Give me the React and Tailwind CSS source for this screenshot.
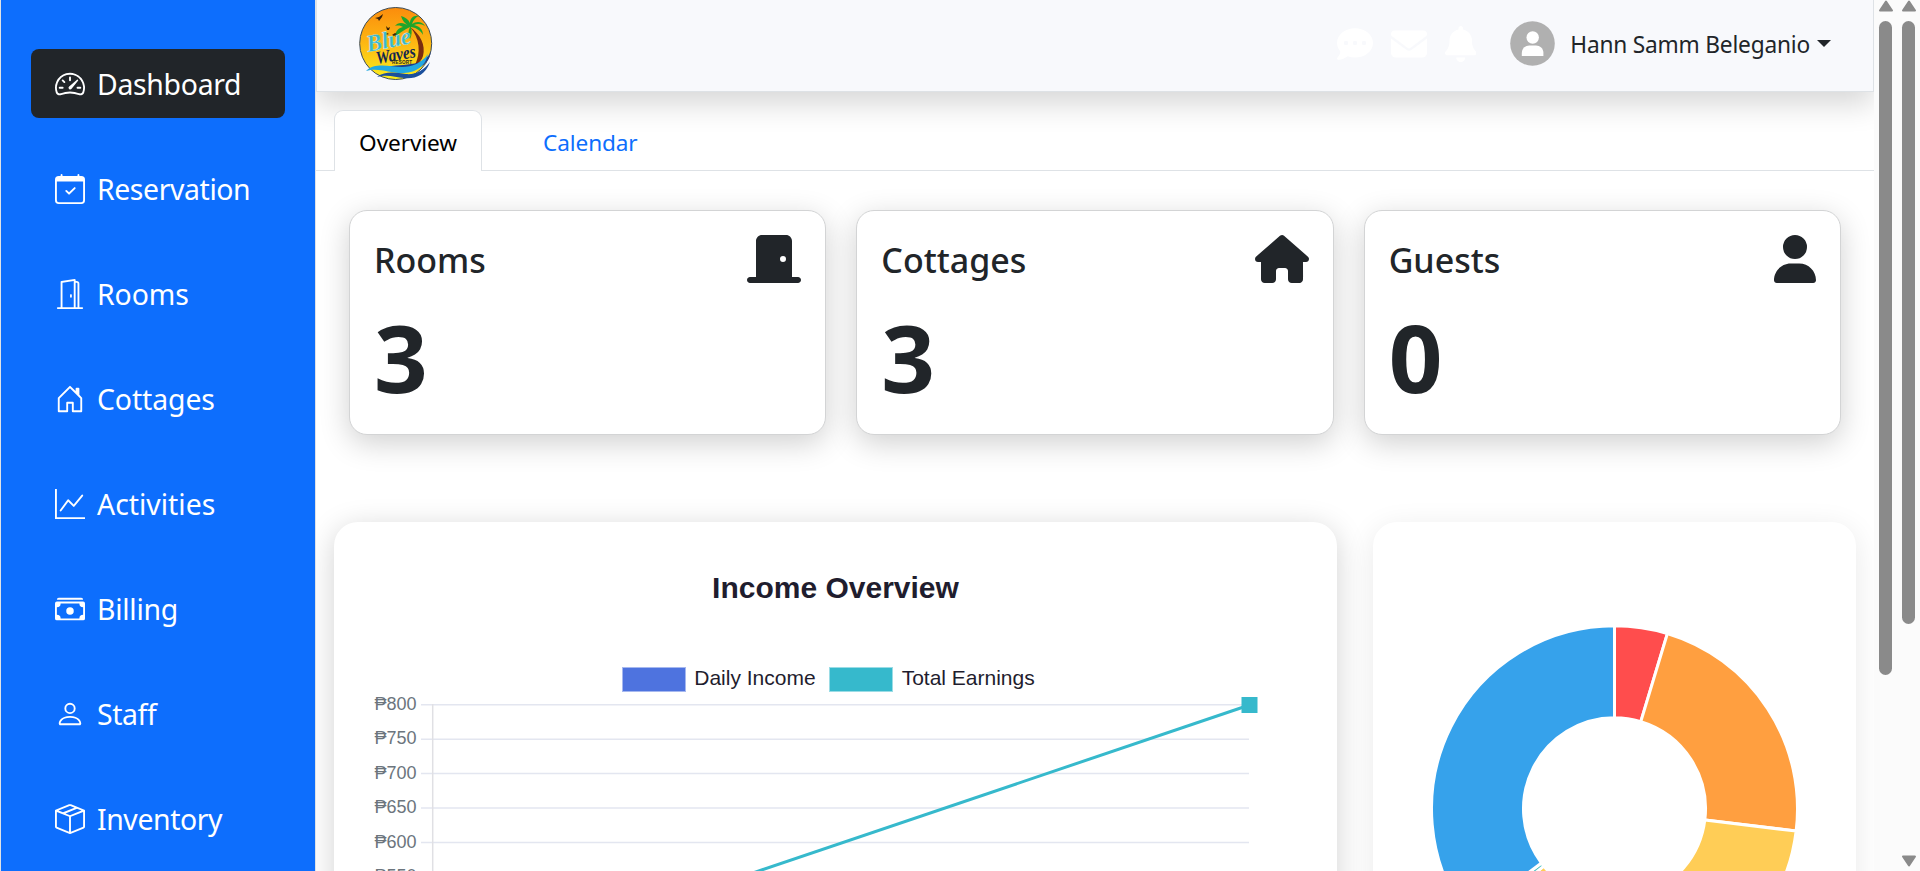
import {
  BsSpeedometer2,
  BsCalendarCheck,
  BsDoorOpen,
  BsHouseDoor,
  BsGraphUp,
  BsCashStack,
  BsPerson,
  BsBoxSeam,
} from "react-icons/bs";
import {
  FaDoorClosed,
  FaHouse,
  FaUser,
  FaCommentDots,
  FaEnvelope,
  FaBell,
} from "react-icons/fa6";

const NAV = [
  { label: "Dashboard", Icon: BsSpeedometer2, active: true, tracking: "tracking-[-0.3px]" },
  { label: "Reservation", Icon: BsCalendarCheck, tracking: "tracking-[-0.4px]" },
  { label: "Rooms", Icon: BsDoorOpen, tracking: "tracking-[-0.1px]" },
  { label: "Cottages", Icon: BsHouseDoor, tracking: "tracking-[-0.1px]" },
  { label: "Activities", Icon: BsGraphUp, tracking: "tracking-normal" },
  { label: "Billing", Icon: BsCashStack, tracking: "tracking-[-0.25px]" },
  { label: "Staff", Icon: BsPerson, tracking: "tracking-[-0.4px]" },
  { label: "Inventory", Icon: BsBoxSeam, tracking: "tracking-[-0.4px]" },
];

const STATS = [
  { label: "Rooms", value: 3, Icon: FaDoorClosed, iconSize: "h-12 w-[54px]" },
  { label: "Cottages", value: 3, Icon: FaHouse, iconSize: "h-12 w-[54px]" },
  { label: "Guests", value: 0, Icon: FaUser, iconSize: "h-12 w-[42px]" },
];

const TICKS = [800, 750, 700, 650, 600, 550];

function Sidebar() {
  return (
    <aside className="flex h-full w-[316px] shrink-0 flex-col gap-9 border-x border-l-[#dee2e6] border-r-[#dee2e6] bg-[#0d6efd] px-[30px] pt-[49px]">
      {NAV.map(({ label, Icon, active, tracking }) => (
        <a
          key={label}
          className={
            active
              ? "flex h-[69px] shrink-0 items-center rounded-lg bg-[#212529] pl-6 text-white"
              : "flex h-[69px] shrink-0 items-center rounded-lg pl-6 text-white"
          }
        >
          <Icon className="size-[30px] shrink-0" />
          <span className={"ml-[12px] text-[28.4px] leading-[40px] " + tracking}>{label}</span>
        </a>
      ))}
    </aside>
  );
}

function Logo() {
  return (
    <svg viewBox="0 0 76 76" className="size-[76px]">
      <defs>
        <linearGradient id="sky" x1="0" y1="0" x2="0" y2="1">
          <stop offset="0" stopColor="#fb8c0c" />
          <stop offset="0.5" stopColor="#fdb813" />
          <stop offset="1" stopColor="#fbee1c" />
        </linearGradient>
        <clipPath id="disc">
          <circle cx="38.7" cy="37.5" r="36" />
        </clipPath>
      </defs>
      <circle cx="38.7" cy="37.5" r="36" fill="url(#sky)" stroke="#3b4a55" strokeWidth="1" />
      <g clipPath="url(#disc)">
        <path d="M53 21c10 7 16 18 13 29-1 4-4 7-8 9 6-12 5-27-5-38z" fill="#7a2d10" />
      </g>
      <path d="M74 46c-2 10-9 17-22 18-10 1-20-2-30 0 12-6 22-4 32-6 10-1 16-5 20-12z" fill="#1d3f8f" />
      <path d="M9 65c9-9 24-4 36-4 10 0 20-4 26-13-3 14-14 19-26 19-13 0-24-6-36-2z" fill="#23a9e1" />
      <path d="M20 71c9-7 20-4 29-3 10 1 18-4 24-12-5 14-15 17-26 16-9-1-17-4-27-1z" fill="#1b4f9c" />
      <path
        d="M53 21c-6-5-12-5-15-1 4-1 6 0 8 1-5 1-8 5-8 10 4-4 9-7 15-10-2 4-2 8 0 12 2-4 2-8 1-12 6 1 10 4 12 8 0-6-4-9-9-10 4-2 8-1 11 1-3-5-9-5-13-2 1-4 4-7 7-8-6-1-9 3-9 7-2-4-5-6-9-7 1 4 4 8 9 11z"
        fill="#1ea52b"
      />
      <path
        d="M18 12l4-1 4-3-1 3-3 4-1-2zM29 20l2 2 2-1-1 3-2 0zM27 28l3-1 2 1-3 1zM35 29l3-2 2 1-3 2z"
        fill="#3a2208"
      />
      <text
        x="11"
        y="46"
        fontSize="24"
        fontStyle="italic"
        fontWeight="700"
        fontFamily="Liberation Serif, serif"
        fill="#37b6c9"
        stroke="#d8f3ee"
        strokeWidth="0.4"
        textLength="45"
        lengthAdjust="spacingAndGlyphs"
        transform="rotate(-11 11 46)"
      >
        Blue
      </text>
      <text
        x="20"
        y="58"
        fontSize="18"
        fontStyle="italic"
        fontWeight="700"
        fontFamily="Liberation Serif, serif"
        fill="#12264f"
        textLength="40"
        lengthAdjust="spacingAndGlyphs"
        transform="rotate(-10 20 58)"
      >
        Waves
      </text>
      <text x="35" y="58" fontSize="4.6" fontWeight="700" fontFamily="Liberation Sans, sans-serif" fill="#2a2a20" textLength="20">
        RESORT
      </text>
    </svg>
  );
}

function Navbar() {
  return (
    <header className="relative flex h-[92px] shrink-0 items-start justify-between border border-t-0 border-[#dee2e6] bg-[#f8f9fc] shadow-[0_12px_28px_rgba(0,0,0,0.16)]">
      <div className="pl-[40px] pt-[6px]">
        <Logo />
      </div>
      <div className="flex items-center pr-[42px] pt-[21px]">
        <div className="flex items-center gap-[18px] text-white">
          <FaCommentDots className="h-[36px] w-[36px]" />
          <FaEnvelope className="h-[36px] w-[36px]" />
          <FaBell className="h-[36px] w-[31.5px]" />
        </div>
        <svg viewBox="0 0 45 45" className="ml-[34px] size-[45px]">
          <circle cx="22.5" cy="22.5" r="22.3" fill="#b0b0b0" />
          <circle cx="22.7" cy="16.5" r="6.2" fill="#fff" />
          <path d="M11.8 35v-3c0-5 4-7.6 7.6-7.6h6.6c4 0 7.4 3 7.4 7.4V35z" fill="#fff" />
        </svg>
        <span className="ml-[15px] pt-[2px] text-[22.7px] leading-[36px] tracking-[-0.2px] text-[#212529]">
          Hann Samm Beleganio
        </span>
        <span className="ml-[7px] border-x-[7px] border-t-[7px] border-x-transparent border-t-[#212529]" />
      </div>
    </header>
  );
}

function Tabs() {
  return (
    <nav className="flex h-[61px] shrink-0 items-stretch pl-[18px] text-[22.6px] shadow-[inset_0_-1px_0_#dee2e6]">
      <a className="flex w-[148px] items-center justify-center rounded-t-[9px] border border-b-0 border-[#dee2e6] bg-white pt-[3px] tracking-[-0.1px] text-black">
        Overview
      </a>
      <a className="ml-[36px] flex items-center px-[25px] pt-[4px] tracking-[-0.1px] text-[#0d6efd]">Calendar</a>
    </nav>
  );
}

function StatCard({ label, value, Icon, iconSize }) {
  return (
    <div className="flex h-[225px] flex-1 flex-col rounded-[18px] border border-[#d3d4d5] bg-white px-6 pt-6 text-[#212529] shadow-[0_8px_30px_rgba(0,0,0,0.19)]">
      <div className="flex h-12 items-center justify-between">
        <h5 className="pt-[2px] text-[34px] font-medium leading-[44px]">{label}</h5>
        <Icon className={iconSize} />
      </div>
      <p className="mt-[17px] text-[94px] font-bold leading-[115px]">{value}</p>
    </div>
  );
}

function IncomeChart() {
  return (
    <section className="flex h-[480px] w-[1003px] flex-col items-center rounded-[24px] bg-white pt-[48px] font-['Liberation_Sans',sans-serif] shadow-[0_6px_30px_rgba(0,0,0,0.18)]">
      <h2 className="text-[30px] font-bold leading-[36px] text-[#1f1d2e]">Income Overview</h2>
      <div className="mr-[14px] mt-[59px] flex items-start text-[21px] leading-[25px] text-[#1f1d2e]">
        <span className="mt-[2px] h-[25px] w-[64px] border border-[#a6b8ef] bg-[#4e73df]" />
        <span className="ml-[8px]">Daily Income</span>
        <span className="ml-[13px] mt-[2px] h-[25px] w-[64px] border border-[#9adce5] bg-[#36b9cc]" />
        <span className="ml-[9px]">Total Earnings</span>
      </div>
      <svg viewBox="334 690 1003 181" className="mt-[-2px] h-[181px] w-[1003px] shrink-0">
        {TICKS.map((tick, i) => (
          <g key={tick}>
            <text x="416.5" y={710 + i * 34.45} textAnchor="end" fontSize="18" fill="#6c757d">
              {"₱" + tick}
            </text>
            <line x1="421" x2="1249" y1={704.7 + i * 34.45} y2={704.7 + i * 34.45} stroke="#e3e6f0" strokeWidth="1.5" />
          </g>
        ))}
        <line x1="432.7" x2="432.7" y1="704" y2="890" stroke="#e0e0e4" strokeWidth="1.5" />
        <line x1="702.5" y1="890" x2="1249.5" y2="705" stroke="#36b9cc" strokeWidth="3" />
        <rect x="1241.5" y="697" width="16" height="16" fill="#36b9cc" />
      </svg>
    </section>
  );
}

const CX = 1614.5;
const CY = 808.8;

function ring(from, to) {
  const at = (deg, r) => {
    const a = (deg * Math.PI) / 180;
    return `${CX + r * Math.sin(a)} ${CY - r * Math.cos(a)}`;
  };
  const large = to - from > 180 ? 1 : 0;
  return `M${at(from, 183)}A183 183 0 ${large} 1 ${at(to, 183)}L${at(to, 91)}A91 91 0 ${large} 0 ${at(from, 91)}Z`;
}

const SLICES = [
  { from: 0, to: 16.8, color: "#ff4d4d" },
  { from: 16.8, to: 97, color: "#ff9f40" },
  { from: 97, to: 231, color: "#ffcd56" },
  { from: 231, to: 233.4, color: "#4bc0c0" },
  { from: 233.4, to: 360, color: "#36a2eb" },
];

function DonutChart() {
  return (
    <section className="h-[480px] w-[483px] rounded-[24px] bg-white shadow-[0_6px_30px_rgba(0,0,0,0.09)]">
      <svg viewBox="1373 522 483 480" className="h-[480px] w-[483px]">
        {SLICES.map((s) => (
          <path key={s.color} d={ring(s.from, s.to)} fill={s.color} stroke="#fff" strokeWidth="3" />
        ))}
      </svg>
    </section>
  );
}

export default function App() {
  return (
    <div className="flex h-[871px] w-[1920px] overflow-hidden bg-white font-['Noto_Sans','Open_Sans',sans-serif]">
      <Sidebar />
      <main className="flex h-full w-[1558px] shrink-0 flex-col overflow-hidden">
        <Navbar />
        <div className="z-10 mt-[18px] flex flex-col">
          <Tabs />
          <div className="mt-[39px] flex gap-[30px] pl-[33px] pr-[33px]">
            {STATS.map((s) => (
              <StatCard key={s.label} {...s} />
            ))}
          </div>
          <div className="mt-[87px] flex gap-[36px] pl-[18px]">
            <IncomeChart />
            <DonutChart />
          </div>
        </div>
      </main>
      <div className="flex h-full flex-1 bg-[#fbfbfb]">
        <div className="flex w-[23px] flex-col items-center">
          <svg viewBox="0 0 16 12" className="h-[12px] w-[16px] shrink-0">
            <path d="M8 1.5L14 10.5H2z" fill="#8a8a8a" stroke="#8a8a8a" strokeWidth="2" strokeLinejoin="round" />
          </svg>
          <div className="mt-[9px] h-[654px] w-[13px] shrink-0 rounded-full bg-[#8a8a8a]" />
        </div>
        <div className="flex w-[23px] flex-col items-center">
          <svg viewBox="0 0 16 12" className="h-[12px] w-[16px] shrink-0">
            <path d="M8 1.5L14 10.5H2z" fill="#8a8a8a" stroke="#8a8a8a" strokeWidth="2" strokeLinejoin="round" />
          </svg>
          <div className="mt-[9px] h-[603px] w-[13px] shrink-0 rounded-full bg-[#8a8a8a]" />
          <svg viewBox="0 0 16 12" className="mt-auto mb-[4px] h-[12px] w-[16px] shrink-0">
            <path d="M8 10.5L14 1.5H2z" fill="#8a8a8a" stroke="#8a8a8a" strokeWidth="2" strokeLinejoin="round" />
          </svg>
        </div>
      </div>
    </div>
  );
}
